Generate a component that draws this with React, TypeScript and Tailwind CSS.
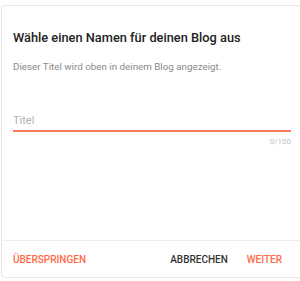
export default function App() {
  return (
    <div className="w-[300px] h-[281px] overflow-hidden bg-white" style={{ fontFamily: "Roboto, 'Liberation Sans', sans-serif" }}>
      <div className="mt-[5px] ml-[1px] w-[320px] h-[273px] rounded border border-[#e6e6e6] flex flex-col">
        <div className="flex-1 px-[11px] pt-[23px]">
          <h2 className="text-[12.8px] leading-[18px] font-medium text-[#222]">Wähle einen Namen für deinen Blog aus</h2>
          <p className="mt-[13px] text-[9.8px] leading-[13px] text-[#8a8a8a]">Dieser Titel wird oben in deinem Blog angezeigt.</p>
          <div className="mt-[40px] w-[278px]">
            <div className="border-b-2 border-[#ff7a5c] pb-[1px] text-[11px] leading-4 text-[#b0b0b0]">Titel</div>
            <div className="mt-[4px] text-right text-[8px] leading-3 text-[#c4c4c4]">0/100</div>
          </div>
        </div>
        <div className="h-[37px] border-t border-[#eeeeee] flex items-center px-[11px] text-[10px] font-medium">
          <span className="text-[#ff6a45]">ÜBERSPRINGEN</span>
          <span className="ml-auto text-[#333]">ABBRECHEN</span>
          <span className="ml-[19px] mr-[27px] text-[#ff6a45]">WEITER</span>
        </div>
      </div>
    </div>
  );
}
